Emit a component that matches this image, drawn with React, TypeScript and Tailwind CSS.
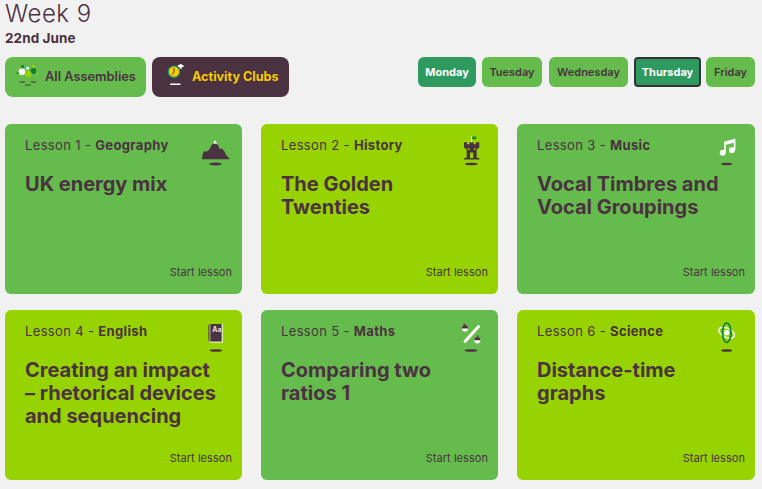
import React from 'react';

const DARK = '#4b3241';

const Mountain = () => (
    <svg width="32" height="32" viewBox="0 0 32 32">
        <path d="M3 23.3 L3.4 19 L5 15.2 L8 15.6 L10.3 13.6 L12.7 9 L16 5 L19.3 9.7 L20.6 13 L22.7 12.6 L25.3 15 L27 19 L31 23.3 Z" fill={DARK} />
        <path d="M14 8 L16 4 L18.3 8.2 L16 7.4 Z" fill="#fff" />
        <ellipse cx="16.5" cy="28" rx="6.5" ry="1.4" fill={DARK} />
    </svg>
);

const Castle = () => (
    <svg width="24" height="36" viewBox="0 0 24 36">
        <rect x="12" y="0" width="1.2" height="6.5" fill="#fff" />
        <path d="M13.2 0.5 H17.2 V3.2 H13.2 Z" fill="#0f8a3c" />
        <path d="M5 6.3 H8 V8.3 H10.5 V6.3 H14.5 V8.3 H17 V6.3 H20.3 V11.5 L17.7 13.5 V21.5 L20.3 22.3 V23.5 H5 V22.3 L7.7 21.5 V13.5 L5 11.5 Z" fill={DARK} />
        <rect x="11" y="16.5" width="3.2" height="5.5" fill="#97d300" />
        <rect x="9" y="12" width="1.3" height="2" fill="#97d300" />
        <rect x="15" y="12" width="1.3" height="2" fill="#97d300" />
        <ellipse cx="12.3" cy="28" rx="6.5" ry="1.3" fill={DARK} />
    </svg>
);

const Note = () => (
    <svg width="24" height="36" viewBox="0 0 24 36">
        <path d="M9 16.5 V6.3 L18.6 3.5 V14" fill="none" stroke="#fff" strokeWidth="1.6" />
        <path d="M9 6 L18.6 3.2 V6.4 L9 9 Z" fill="#fff" />
        <circle cx="6.7" cy="16.7" r="2.9" fill="#fff" />
        <circle cx="15.9" cy="14.2" r="2.9" fill="#fff" />
        <ellipse cx="10.7" cy="28" rx="5.5" ry="1.2" fill={DARK} />
    </svg>
);

const Book = () => (
    <svg width="20" height="36" viewBox="0 0 20 36">
        <rect x="5.3" y="2" width="12.4" height="18.6" fill="#fff" />
        <rect x="5.3" y="2" width="11.4" height="17.6" fill={DARK} />
        <rect x="3.4" y="2.5" width="0.9" height="16.5" fill={DARK} />
        <text x="7.2" y="10" fontSize="7" fontWeight="700" fill="#e4dde1" fontFamily="Inter, sans-serif">Aa</text>
        <ellipse cx="11" cy="28.5" rx="6.5" ry="1.3" fill={DARK} />
    </svg>
);

const Percent = () => (
    <svg width="24" height="36" viewBox="0 0 24 36">
        <path d="M6 19.5 L19.5 4.5" stroke="#fff" strokeWidth="3" strokeLinecap="round" />
        <circle cx="6" cy="6.5" r="3.1" fill="#fff" />
        <path d="M2.9 6.5 Q2.9 3 6 3 Q9.1 3 9.1 6.5 Z" fill={DARK} />
        <rect x="4.7" y="1" width="1" height="2.5" fill={DARK} />
        <circle cx="18.3" cy="18.3" r="3.1" fill="#fff" />
        <path d="M15.2 18.3 Q15.2 15 18.3 15 Q21.4 15 21.4 18.3 Z" fill={DARK} />
        <rect x="18.4" y="13" width="1" height="2.5" fill={DARK} />
        <ellipse cx="12" cy="28.5" rx="6.5" ry="1.3" fill={DARK} />
    </svg>
);

const Atom = () => (
    <svg width="24" height="36" viewBox="0 0 24 36">
        <ellipse cx="10.7" cy="10.7" rx="8.5" ry="4.6" fill="none" stroke="#fff" strokeWidth="1.4" transform="rotate(25 10.7 10.7)" />
        <ellipse cx="10.7" cy="10.7" rx="4.2" ry="9.6" fill="none" stroke="#0f8a3c" strokeWidth="1.8" />
        <circle cx="10.7" cy="10.7" r="2.6" fill="#fff" />
        <ellipse cx="10.7" cy="28.5" rx="5.5" ry="1.3" fill={DARK} />
    </svg>
);

const AssembliesIcon = () => (
    <svg width="24" height="24" viewBox="0 0 24 24">
        <circle cx="6" cy="6.7" r="3.3" fill="#fff" />
        <circle cx="11.7" cy="3.3" r="1.5" fill="#fff" />
        <circle cx="17.3" cy="6" r="3" fill="#0f7f3c" />
        <circle cx="6.7" cy="1.4" r="1.5" fill="#0f7f3c" />
        <circle cx="17.3" cy="1.4" r="1.5" fill="#97d300" />
        <circle cx="12.3" cy="9" r="3.3" fill="#97d300" />
        <circle cx="1.5" cy="8.3" r="1" fill="#0f7f3c" />
        <circle cx="21.7" cy="7.7" r="1" fill="#97d300" />
        <rect x="3.3" y="16.6" width="5.7" height="1" rx="0.5" fill={DARK} />
        <rect x="9" y="19.6" width="5.7" height="1" rx="0.5" fill={DARK} />
        <rect x="14.7" y="16.6" width="5.7" height="1" rx="0.5" fill={DARK} />
    </svg>
);

const ClubsIcon = () => (
    <svg width="24" height="26" viewBox="0 0 24 26">
        <circle cx="8" cy="7.7" r="5.8" fill="#f7cc00" stroke="#1a8a6b" strokeWidth="1.3" />
        <path d="M8 4 V8.2 L5.8 10.5" fill="none" stroke={DARK} strokeWidth="1" />
        <path d="M14.7 -0.8 V4.8 M11.9 2 H17.5" stroke="#fff" strokeWidth="2" />
        <rect x="4" y="19.5" width="10.7" height="1.4" rx="0.7" fill="#fff" />
    </svg>
);

const lessons = [
    { n: 1, subject: 'Geography', title: 'UK energy mix', lime: false, icon: <Mountain /> },
    { n: 2, subject: 'History', title: 'The Golden Twenties', lime: true, icon: <Castle /> },
    { n: 3, subject: 'Music', title: 'Vocal Timbres and Vocal Groupings', lime: false, icon: <Note /> },
    { n: 4, subject: 'English', title: 'Creating an impact – rhetorical devices and sequencing', lime: true, icon: <Book /> },
    { n: 5, subject: 'Maths', title: 'Comparing two ratios 1', lime: false, icon: <Percent /> },
    { n: 6, subject: 'Science', title: 'Distance-time graphs', lime: true, icon: <Atom /> },
];

const days = [
    { name: 'Monday', cls: 'w-[58px] rounded-md bg-[#2f9a60] text-white font-bold' },
    { name: 'Tuesday', cls: 'w-[60px] rounded-md bg-[#65bc4d] text-[#4b3241] font-semibold' },
    { name: 'Wednesday', cls: 'w-[79px] ml-[1px] rounded-md bg-[#65bc4d] text-[#4b3241] font-semibold' },
    { name: 'Thursday', cls: 'w-[67px] rounded-[4px] bg-[#2f9a60] text-white font-bold border-2 border-[#33323a]' },
    { name: 'Friday', cls: 'w-[49px] -ml-[1px] rounded-md bg-[#65bc4d] text-[#4b3241] font-semibold' },
];

const App: React.FC = () => {
    return (
        <div className="w-[762px] h-[489px] overflow-hidden bg-[#f1f1f1] text-[#4b3241] font-['Inter',sans-serif]">
            <div className="px-[5px]">
                <h1 className="text-[24px] leading-[28px] font-light tracking-[0.5px]">Week 9</h1>
                <p className="text-[13.5px] leading-[16px] mt-[2px] font-bold tracking-[0.1px]">22nd June</p>
            </div>
            <div className="flex justify-between items-start pl-[5px] pr-[7px] mt-[11px]">
                <div className="flex gap-[6px]">
                    <div className="flex items-center w-[141px] h-[40px] pl-[11px] rounded-lg bg-[#65bc4d] text-[12.8px] font-semibold">
                        <AssembliesIcon />
                        <span className="ml-[5px]">All Assemblies</span>
                    </div>
                    <div className="flex items-center w-[137px] h-[40px] pl-[14px] rounded-lg bg-[#4b3241] text-[#f7cc00] text-[12.6px] font-bold">
                        <ClubsIcon />
                        <span className="ml-[2px]">Activity Clubs</span>
                    </div>
                </div>
                <div className="flex gap-[6px]">
                    {days.map(d => (
                        <div key={d.name} className={`${d.cls} h-[30px] flex items-center justify-center text-[11px]`}>
                            {d.name}
                        </div>
                    ))}
                </div>
            </div>
            <div className="grid grid-cols-[237px_237px_238px] gap-x-[19px] gap-y-[16px] pl-[5px] mt-[27px]">
                {lessons.map(l => (
                    <div
                        key={l.n}
                        className={`relative h-[170px] rounded-md pt-[13px] px-[20px] ${l.lime ? 'bg-[#97d300]' : 'bg-[#65bc4d]'}`}
                    >
                        <p className="text-[13px] leading-[16px] tracking-[0.35px]">
                            Lesson {l.n} - <span className="font-bold">{l.subject}</span>
                        </p>
                        <h2 className="text-[20px] leading-[23px] font-bold mt-[20px] pr-[3px]">{l.title}</h2>
                        <div className="absolute top-[12px] right-[10px] w-[34px] flex justify-center">{l.icon}</div>
                        <span className="absolute right-[10px] bottom-[15px] text-[11px] leading-[14px] tracking-[0.05px]">Start lesson</span>
                    </div>
                ))}
            </div>
        </div>
    );
};

export default App;
